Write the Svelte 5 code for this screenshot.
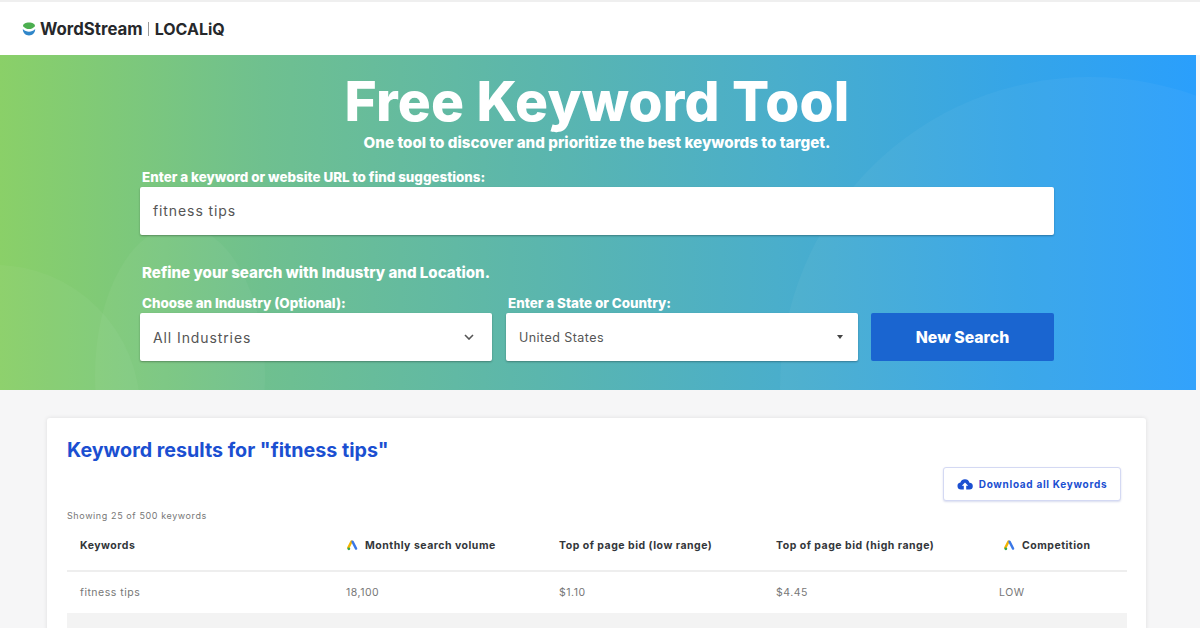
<script>
    const columns = [
        { label: "Keywords", ads: false },
        { label: "Monthly search volume", ads: true },
        { label: "Top of page bid (low range)", ads: false },
        { label: "Top of page bid (high range)", ads: false },
        { label: "Competition", ads: true }
    ];
    const row = ["fitness tips", "18,100", "$1.10", "$4.45", "LOW"];
</script>

{#snippet adsIcon()}
    <svg class="ads" viewBox="0 0 12 12" aria-hidden="true">
        <path d="M4.9 1.6 1.4 8.6" stroke="#f4b400" stroke-width="2.6" stroke-linecap="round" fill="none" />
        <path d="M6 1.8 9.9 9.4" stroke="#3b78e7" stroke-width="2.6" stroke-linecap="round" fill="none" />
        <circle cx="2" cy="9.6" r="1.5" fill="#34a853" />
    </svg>
{/snippet}

<div class="page">
    <header class="topbar">
        <svg class="logo" viewBox="0 0 14 14" aria-hidden="true">
            <path d="M1 4.2C1 1.8 3.6.6 7 .6s6 1.2 6 3.6C11 6.4 9 7 7 7S3 6.4 1 4.2Z" fill="#4caf50" />
            <path d="M.8 7C2.600 9 4.800 9.700 7 9.700S11.400 9 13.200 7C13.200 11 10.400 13.400 7 13.400S.8 11 .8 7Z" fill="#2f86c9" />
        </svg>
        <span class="brand">WordStream</span>
        <span class="divider"></span>
        <span class="brand second">LOCALiQ</span>
    </header>

    <section class="hero">
        <div class="blob one"></div>
        <div class="blob two"></div>
        <div class="blob three"></div>

        <div class="hero-inner">
            <h1>Free Keyword Tool</h1>
            <p class="tagline">One tool to discover and prioritize the best keywords to target.</p>

            <label class="field-label" for="kw">Enter a keyword or website URL to find suggestions:</label>
            <div class="box main-box" id="kw">fitness tips</div>

            <p class="refine">Refine your search with Industry and Location.</p>

            <div class="selects">
                <div class="col">
                    <span class="field-label">Choose an Industry (Optional):</span>
                    <div class="box select">
                        <span>All Industries</span>
                        <svg class="chev" viewBox="0 0 10 6" aria-hidden="true">
                            <path d="M1 1l4 4 4-4" fill="none" stroke="#555" stroke-width="1.6" />
                        </svg>
                    </div>
                </div>
                <div class="col">
                    <span class="field-label">Enter a State or Country:</span>
                    <div class="box select native">
                        <span>United States</span>
                        <span class="caret"></span>
                    </div>
                </div>
                <button class="search">New Search</button>
            </div>
        </div>
    </section>

    <main class="content">
        <div class="card">
            <h2>Keyword results for "fitness tips"</h2>
            <div class="actions">
                <button class="download">
                    <svg viewBox="0 0 16 12" aria-hidden="true">
                        <path d="M4 11.500a3.500 3.500 0 0 1-.6-6.950A4.800 4.800 0 0 1 12.500 4.700 3.400 3.400 0 0 1 12.300 11.500H9.200V7.800h2L8 4.600 4.800 7.800h2v3.700Z" fill="#1b4fd1" />
                    </svg>
                    Download all Keywords
                </button>
            </div>
            <p class="showing">Showing 25 of 500 keywords</p>
            <div class="table">
                <div class="tr head">
                    {#each columns as col}
                        <div class="td">
                            {#if col.ads}{@render adsIcon()}{/if}
                            {col.label}
                        </div>
                    {/each}
                </div>
                <div class="tr body">
                    {#each row as cell}
                        <div class="td">{cell}</div>
                    {/each}
                </div>
                <div class="tr shaded"></div>
            </div>
        </div>
    </main>
</div>

<style>
    :global(body) {
        margin: 0;
        background: #f6f6f7;
        font-family: Inter, "Open Sans", sans-serif;
    }

    .page {
        width: 1200px;
        height: 628px;
        overflow: hidden;
    }

    .topbar {
        height: 55px;
        box-sizing: border-box;
        border-top: 2px solid #efefef;
        padding: 0 0 0 22px;
        background: #fff;
        display: flex;
        align-items: center;
        color: #26282b;
    }

    .logo {
        width: 14px;
        height: 14px;
        margin-right: 4px;
    }

    .brand {
        font-size: 16.8px;
        font-weight: 700;
    }

    .second {
        font-size: 16px;
    }

    .divider {
        width: 1px;
        height: 14px;
        background: #9a9a9a;
        margin: 0 6px 0 5px;
    }

    .hero {
        position: relative;
        width: 1196px;
        height: 335px;
        overflow: hidden;
        background: linear-gradient(90deg, #8ad068 0%, #6fc08f 22%, #5bb6ad 45%, #4aaecb 65%, #35a5e8 85%, #2a9ffc 100%);
    }

    .blob {
        position: absolute;
        border-radius: 50%;
        background: rgba(255, 255, 255, 0.04);
    }

    .one {
        left: -150px;
        top: 210px;
        width: 290px;
        height: 290px;
    }

    .two {
        left: 95px;
        top: 170px;
        width: 170px;
        height: 300px;
    }

    .three {
        left: 780px;
        top: 22px;
        width: 620px;
        height: 620px;
    }

    .hero-inner {
        position: relative;
        width: 914px;
        margin-left: 140px;
    }

    h1 {
        margin: 16px 0 0;
        height: 60px;
        line-height: 60px;
        font-size: 55px;
        font-weight: 800;
        color: #fff;
        text-align: center;
        letter-spacing: 0.2px;
    }

    .tagline {
        margin: 3px 0 0;
        height: 18px;
        line-height: 18px;
        font-size: 15.2px;
        font-weight: 800;
        color: #fff;
        text-align: center;
    }

    .field-label {
        display: block;
        height: 16px;
        line-height: 16px;
        padding-left: 2px;
        font-size: 13.4px;
        font-weight: 800;
        color: #fff;
        white-space: nowrap;
    }

    label.field-label {
        margin-top: 17px;
    }

    .box {
        box-sizing: border-box;
        background: #fff;
        border-radius: 2px;
        box-shadow: 0 1px 2px rgba(0, 0, 0, 0.3);
        color: #555;
        display: flex;
        align-items: center;
        font-size: 14px;
        letter-spacing: 0.9px;
        padding-left: 13px;
    }

    .main-box {
        height: 48px;
        margin-top: 2px;
        padding-bottom: 2px;
    }

    .refine {
        margin: 28px 0 0;
        height: 20px;
        line-height: 20px;
        padding-left: 2px;
        font-size: 15.1px;
        font-weight: 800;
        color: #fff;
    }

    .selects {
        display: flex;
        margin-top: 12px;
        gap: 14px;
        align-items: flex-end;
    }

    .col {
        width: 352px;
    }

    .col + .col {
        margin-right: -1px;
    }

    .select {
        height: 48px;
        margin-top: 2px;
        justify-content: space-between;
        padding-right: 18px;
    }

    .native {
        font-size: 12.5px;
        letter-spacing: 0.45px;
        padding-right: 15px;
    }

    .chev {
        width: 10px;
        height: 6px;
    }

    .caret {
        width: 0;
        height: 0;
        border-left: 3.5px solid transparent;
        border-right: 3.5px solid transparent;
        border-top: 4px solid #444;
    }

    .search {
        width: 183px;
        height: 48px;
        border: 0;
        border-radius: 2px;
        background: #1a65d0;
        color: #fff;
        font-family: inherit;
        font-size: 15.8px;
        font-weight: 800;
    }

    .content {
        padding: 28px 0 0 47px;
    }

    .card {
        width: 1099px;
        height: 260px;
        box-sizing: border-box;
        padding: 20px 19px 0 20px;
        background: #fff;
        border-radius: 3px;
        box-shadow: 0 0 4px rgba(0, 0, 0, 0.1);
    }

    h2 {
        margin: 0;
        height: 24px;
        line-height: 24px;
        font-size: 19.7px;
        font-weight: 700;
        color: #1b4fd1;
    }

    .actions {
        display: flex;
        justify-content: flex-end;
        margin-top: 5px;
        padding-right: 6px;
    }

    .download {
        width: 178px;
        height: 34px;
        box-sizing: border-box;
        border: 1px solid #d4d9f3;
        border-radius: 3px;
        background: #fff;
        box-shadow: 0 1px 2px rgba(40, 60, 160, 0.18);
        color: #1b4fd1;
        font-family: inherit;
        font-size: 10px;
        font-weight: 700;
        letter-spacing: 0.7px;
        display: flex;
        align-items: center;
        justify-content: center;
        gap: 6px;
        padding: 0;
        white-space: nowrap;
    }

    .download svg {
        width: 16px;
        height: 12px;
    }

    .showing {
        margin: 9px 0 0;
        height: 11px;
        line-height: 12px;
        font-size: 9px;
        color: #777;
        letter-spacing: 0.6px;
    }

    .tr {
        display: grid;
        grid-template-columns: 266px 213px 217px 223px 1fr;
        padding-left: 13px;
        align-items: center;
    }

    .head {
        height: 49px;
        box-sizing: content-box;
        border-bottom: 2px solid #eeeeee;
        font-size: 10.5px;
        font-weight: 700;
        letter-spacing: 0.5px;
        color: #33363a;
    }

    .head .td {
        display: flex;
        align-items: center;
        gap: 7px;
        white-space: nowrap;
    }

    .head .td:last-child {
        padding-left: 4px;
    }

    .ads {
        width: 11px;
        height: 11px;
        margin-left: 1px;
    }

    .body {
        height: 41px;
        font-size: 10.5px;
        letter-spacing: 0.5px;
        color: #777;
    }

    .shaded {
        height: 40px;
        background: #f3f3f3;
    }
</style>
